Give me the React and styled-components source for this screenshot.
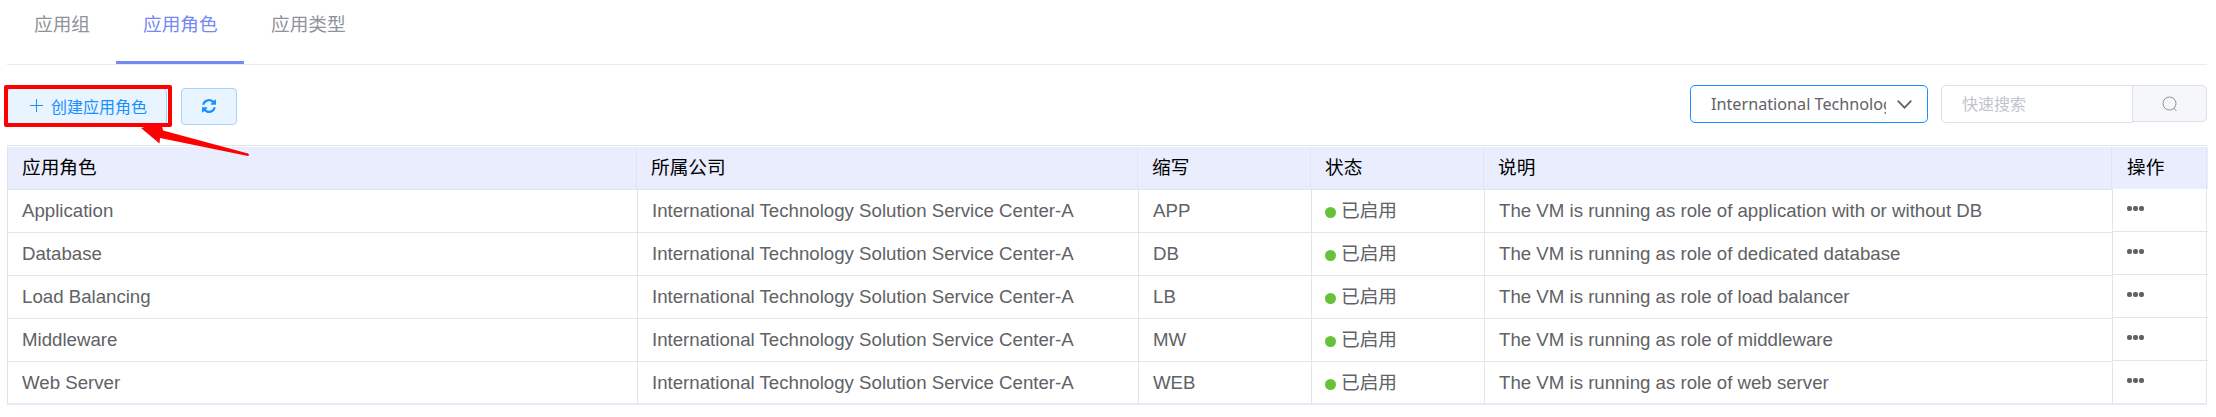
import React from 'react';
import styled, { createGlobalStyle } from 'styled-components';

const GlobalStyle = createGlobalStyle`
  * { box-sizing: border-box; }
  body {
    margin: 0;
    background: #fff;
    color: #606266;
    font-family: "Liberation Sans", "Noto Sans CJK SC", sans-serif;
    font-size: 18.67px;
  }
`;

const Page = styled.main`
  position: relative;
  width: 2216px;
  height: 417px;
  padding: 0 9px 0 7px;
  overflow: hidden;
`;

const Tabs = styled.nav`
  display: flex;
  height: 65px;
  border-bottom: 1px solid #e8eaec;
`;

const Tab = styled.a`
  height: 64px;
  width: ${(p) => p.$width}px;
  padding-left: 27px;
  line-height: 50px;
  color: ${(p) => (p.$active ? '#7489f3' : '#909399')};
  border-bottom: 3px solid ${(p) => (p.$active ? '#7489f3' : 'transparent')};
`;

const Toolbar = styled.div`
  display: flex;
  align-items: flex-start;
  height: 80px;
  padding-top: 20px;
`;

const Button = styled.button`
  display: flex;
  align-items: center;
  justify-content: center;
  gap: 8px;
  width: ${(p) => p.$width}px;
  height: 37px;
  margin: 3px 14px 0 0;
  padding: 0 0 2px ${(p) => p.$indent || 0}px;
  border: 1px solid #a3d3ff;
  border-radius: 4px;
  background: #e8f4ff;
  color: #1890ff;
  font: 16px "Liberation Sans", "Noto Sans CJK SC", sans-serif;
`;

const Select = styled.div`
  display: flex;
  align-items: center;
  width: 238px;
  height: 38px;
  margin: 0 13px 0 auto;
  padding: 0 14px 0 20px;
  border: 1px solid #1890ff;
  border-radius: 5px;
  font: 16.2px "Noto Sans", sans-serif;
`;

const SelectValue = styled.span`
  width: 175px;
  margin-right: 11px;
  overflow: hidden;
  white-space: nowrap;
`;

const Search = styled.div`
  display: flex;
  width: 266px;
  height: 38px;
`;

const SearchInput = styled.div`
  width: 192px;
  height: 38px;
  padding-left: 20px;
  border: 1px solid #dcdfe6;
  border-radius: 5px 0 0 5px;
  line-height: 37px;
  font-size: 16px;
  color: #c0c4cc;
`;

const SearchButton = styled.div`
  display: flex;
  align-items: center;
  justify-content: center;
  width: 74px;
  height: 37px;
  border: 1px solid #dcdfe6;
  border-left: 0;
  border-radius: 0 5px 5px 0;
  background: #f5f7fa;
`;

const Table = styled.section`
  display: grid;
  grid-template-columns: 2105px 95px;
  height: 260px;
  padding-top: 1px;
  border: 1px solid #dfe6ec;
  border-right: 0;
  border-bottom: 2px solid #e5eaf5;
`;

const Header = styled.div`
  display: grid;
  grid-template-columns: ${(p) => p.$columns};
  height: ${(p) => p.$height}px;
  background: #e9edfe;
  border-bottom: ${(p) => (p.$line ? '1px solid #dfe6ec' : '0')};
  color: #000;
`;

const HeaderCell = styled.div`
  padding: 0 0 0 14px;
  line-height: 42px;
  border-right: 1px solid #dfe6ec;
`;

const Row = styled.div`
  display: grid;
  grid-template-columns: ${(p) => p.$columns};
  height: 43px;
  border-bottom: 1px solid #dfe6ec;
  &:last-child { border-bottom: 0; height: ${(p) => p.$last}px; }
`;

const Cell = styled.div`
  padding: 0 0 0 14px;
  line-height: 42px;
  border-right: 1px solid #dfe6ec;
  white-space: nowrap;
`;

const Status = styled.span`
  display: flex;
  align-items: center;
  gap: 5px;
  margin-left: -1px;
  &::before {
    content: "";
    width: 11px;
    height: 11px;
    margin-top: 3px;
    border-radius: 50%;
    background: #67c23a;
  }
`;

const More = styled.div`
  display: flex;
  gap: 1px;
  padding-top: 17px;
  i { width: 5px; height: 5px; border-radius: 2px; background: #606266; }
`;

const Callout = styled.div`
  position: absolute;
  left: 4px;
  top: 85px;
  width: 168px;
  height: 42px;
  border: 4px solid #fe0000;
  border-radius: 2px;
`;

const Arrow = styled.svg`
  position: absolute;
  left: 138px;
  top: 124px;
`;

const HEADER_COLUMNS = '629px 501px 173px 173px 628px';
const BODY_COLUMNS = '630px 501px 173px 173px 628px';

const rows = [
  ['Application', 'APP', 'The VM is running as role of application with or without DB'],
  ['Database', 'DB', 'The VM is running as role of dedicated database'],
  ['Load Balancing', 'LB', 'The VM is running as role of load balancer'],
  ['Middleware', 'MW', 'The VM is running as role of middleware'],
  ['Web Server', 'WEB', 'The VM is running as role of web server'],
];

const PlusIcon = () => (
  <svg width="13" height="13" viewBox="0 0 13 13" stroke="#1890ff" fill="none">
    <path d="M6.5 0v13M0 6.5h13" />
  </svg>
);

const RefreshIcon = () => (
  <svg width="14" height="14" viewBox="0 0 1536 1536" fill="#1890ff">
    <path d="M1511 928q0 5-1 7-64 268-268 434.500T764 1536q-146 0-282.500-55T238 1324l-129 129q-19 19-45 19t-45-19-19-45V960q0-26 19-45t45-19h448q26 0 45 19t19 45-19 45l-137 137q71 66 161 102t187 36q134 0 250-65t186-179q11-17 53-117 8-23 30-23h192q13 0 22.500 9.500t9.500 22.500zM1536 128v448q0 26-19 45t-45 19h-448q-26 0-45-19t-19-45 19-45l138-138Q969 256 768 256q-134 0-250 65T332 500q-11 17-53 117-8 23-30 23H50q-13 0-22.500-9.500T18 608v-7q65-268 270-434.500T768 0q146 0 284 55.500T1297 212l130-129q19-19 45-19t45 19 19 45z" />
  </svg>
);

export default function App() {
  return (
    <Page>
      <GlobalStyle />
      <Tabs>
        <Tab $width={109}>应用组</Tab>
        <Tab $width={128} $active>应用角色</Tab>
        <Tab $width={128}>应用类型</Tab>
      </Tabs>
      <Toolbar>
        <Button $width={160} $indent={3}><PlusIcon />创建应用角色</Button>
        <Button $width={56}><RefreshIcon /></Button>
        <Select>
          <SelectValue>International Technology</SelectValue>
          <svg width="15" height="9" viewBox="0 0 15 9" fill="none" stroke="#606266" strokeWidth="1.7">
            <path d="M.7.7 7.500 7.700 14.300.7" />
          </svg>
        </Select>
        <Search>
          <SearchInput>快速搜索</SearchInput>
          <SearchButton>
            <svg width="16" height="16" viewBox="0 0 16 16" fill="none" stroke="#909399">
              <circle cx="7.500" cy="7.500" r="6.500" />
              <path d="m11.500 12 3 3" />
            </svg>
          </SearchButton>
        </Search>
      </Toolbar>
      <Table>
        <div>
          <Header $columns={HEADER_COLUMNS} $height={43} $line>
            {['应用角色', '所属公司', '缩写', '状态', '说明'].map((t) => <HeaderCell key={t}>{t}</HeaderCell>)}
          </Header>
          {rows.map(([name, abbr, note]) => (
            <Row key={name} $columns={BODY_COLUMNS} $last={42}>
              <Cell>{name}</Cell>
              <Cell>International Technology Solution Service Center-A</Cell>
              <Cell>{abbr}</Cell>
              <Cell><Status>已启用</Status></Cell>
              <Cell>{note}</Cell>
            </Row>
          ))}
        </div>
        <div>
          <Header $columns="94px" $height={42}><HeaderCell>操作</HeaderCell></Header>
          {rows.map(([name]) => (
            <Row key={name} $columns="94px" $last={43}>
              <Cell><More><i /><i /><i /></More></Cell>
            </Row>
          ))}
        </div>
      </Table>
      <Callout />
      <Arrow width="114" height="34" viewBox="0 0 114 34">
        <path d="M3 4 10 2H24L25 6.500 110 29.500Q112 31 110 32L22 14 21.500 19.500Z" fill="#fe0000" />
      </Arrow>
    </Page>
  );
}
